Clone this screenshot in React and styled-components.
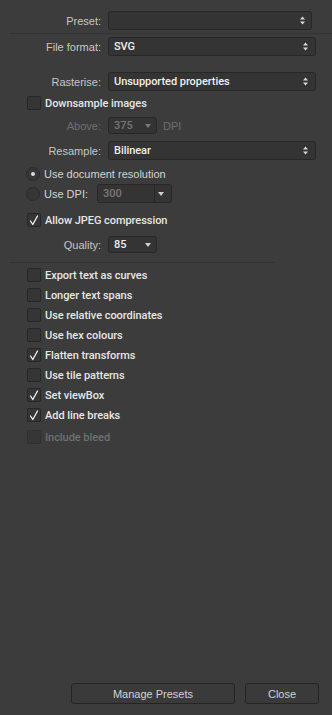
import React from 'react';
import styled, { createGlobalStyle } from 'styled-components';

const GlobalStyle = createGlobalStyle`
  html, body { margin: 0; padding: 0; background: #3c3c3c; }
  body { font-family: "Liberation Sans", Arial, sans-serif; font-size: 11px; color: #d6d6d6; }
`;

const strong = `
  font-family: Roboto, "Liberation Sans", Arial, sans-serif;
  font-weight: 500;
  font-size: 11px;
  letter-spacing: -0.05px;
`;

const Panel = styled.div`
  width: 332px;
  height: 715px;
  display: flex;
  flex-direction: column;
  background: #3c3c3c;
  box-sizing: border-box;
`;

const FormRow = styled.div`
  display: flex;
  align-items: center;
  height: ${p => p.h || 19}px;
  margin-top: ${p => p.mt || 0}px;
  padding-right: ${p => p.pr || 16}px;
`;

const Label = styled.div`
  width: 101px;
  flex: none;
  text-align: right;
  color: ${p => (p.dim ? '#6e6e6e' : '#c6c6c6')};
  margin-right: 7px;
`;

const Field = styled.div`
  flex: ${p => (p.w ? 'none' : 1)};
  width: ${p => (p.w ? `${p.w}px` : 'auto')};
  height: 100%;
  box-sizing: border-box;
  display: flex;
  align-items: center;
  background: #343434;
  border: 1px solid #272727;
  border-radius: 3px;
  padding-left: 5px;
  ${strong}
  color: ${p => (p.dim ? '#767676' : '#efefef')};
`;

const Value = styled.span`
  flex: 1;
`;

const Stepper = styled.svg`
  width: 5px;
  height: 9px;
  margin-right: ${p => p.mr || 7}px;
`;

const Caret = styled.svg`
  width: 6px;
  height: 4px;
  margin-right: ${p => p.mr || 5}px;
`;

const Divider = styled.div`
  height: 1px;
  background: #333333;
  margin-top: ${p => p.mt || 0}px;
  margin-left: 10px;
  width: ${p => p.w || 322}px;
`;

const CheckRow = styled.div`
  display: flex;
  align-items: center;
  height: 14px;
  margin-top: ${p => p.mt || 0}px;
  padding-left: 27px;
`;

const Box = styled.div`
  width: 14px;
  height: 14px;
  box-sizing: border-box;
  flex: none;
  background: ${p => (p.disabled ? '#363636' : '#353535')};
  border: 1px solid ${p => (p.disabled ? '#303030' : '#262626')};
  border-radius: 2px;
  display: flex;
  align-items: center;
  justify-content: center;
`;

const CheckLabel = styled.span`
  margin-left: 4px;
  ${strong}
  color: ${p => (p.disabled ? '#707070' : '#e6e6e6')};
`;

const RadioRow = styled.div`
  display: flex;
  align-items: center;
  height: ${p => p.h || 14}px;
  margin-top: ${p => p.mt || 0}px;
  padding-left: 26px;
`;

const Radio = styled.div`
  width: 14px;
  height: 14px;
  box-sizing: border-box;
  border-radius: 50%;
  background: #363636;
  border: 1px solid #2a2a2a;
  display: flex;
  align-items: center;
  justify-content: center;
  flex: none;
  &::after {
    content: '';
    width: 4px;
    height: 4px;
    border-radius: 50%;
    background: ${p => (p.on ? '#dcdcdc' : 'transparent')};
  }
`;

const RadioLabel = styled.span`
  margin-left: 4px;
  color: #d4d4d4;
  width: ${p => (p.w ? `${p.w}px` : 'auto')};
`;

const Combo = styled.div`
  width: 75px;
  height: 100%;
  box-sizing: border-box;
  display: flex;
  background: #343434;
  border: 1px solid #272727;
  border-radius: 3px;
`;

const ComboText = styled.div`
  flex: 1;
  display: flex;
  align-items: center;
  padding-left: 5px;
  ${strong}
  color: #7a7a7a;
`;

const ComboButton = styled.div`
  width: 16px;
  border-left: 1px solid #272727;
  display: flex;
  align-items: center;
  justify-content: center;
`;

const Unit = styled.span`
  margin-left: 6px;
  color: #6e6e6e;
`;

const Spacer = styled.div`
  flex: 1;
`;

const Footer = styled.div`
  display: flex;
  justify-content: flex-end;
  gap: 10px;
  padding: 0 13px 11px 0;
`;

const Button = styled.div`
  width: ${p => p.w}px;
  height: 21px;
  box-sizing: border-box;
  display: flex;
  align-items: center;
  justify-content: center;
  background: #3a3a3a;
  border: 1px solid #242424;
  border-radius: 3px;
  color: #d2d2d2;
  font-size: 11px;
`;

const UpDown = ({ mr }) => (
  <Stepper mr={mr} viewBox="0 0 5 9">
    <path d="M2.5 0.5 L5 3.5 L0 3.5 Z" fill="#d8d8d8" />
    <path d="M2.5 8.5 L5 5.5 L0 5.5 Z" fill="#d8d8d8" />
  </Stepper>
);

const Down = ({ mr, color = '#d0d0d0' }) => (
  <Caret mr={mr} viewBox="0 0 6 4">
    <path d="M0 0 L6 0 L3 4 Z" fill={color} />
  </Caret>
);

const Tick = () => (
  <svg width="10" height="11" viewBox="0 0 10 11">
    <path d="M1.5 6 L3.8 9.5 L8.5 1" stroke="#f2f2f2" strokeWidth="1.3" fill="none" strokeLinecap="round" strokeLinejoin="round" />
  </svg>
);

const Check = ({ label, checked, disabled, mt }) => (
  <CheckRow mt={mt}>
    <Box disabled={disabled}>{checked && <Tick />}</Box>
    <CheckLabel disabled={disabled}>{label}</CheckLabel>
  </CheckRow>
);

const options = [
  ['Export text as curves', false],
  ['Longer text spans', false],
  ['Use relative coordinates', false],
  ['Use hex colours', false],
  ['Flatten transforms', true],
  ['Use tile patterns', false],
  ['Set viewBox', true],
  ['Add line breaks', true],
];

export default function App() {
  return (
    <Panel>
      <GlobalStyle />
      <FormRow mt={11} pr={20}>
        <Label>Preset:</Label>
        <Field><Value /><UpDown mr={6} /></Field>
      </FormRow>
      <Divider mt={3} />
      <FormRow mt={3}>
        <Label>File format:</Label>
        <Field><Value>SVG</Value><UpDown /></Field>
      </FormRow>
      <FormRow mt={16}>
        <Label>Rasterise:</Label>
        <Field><Value>Unsupported properties</Value><UpDown /></Field>
      </FormRow>
      <Check label="Downsample images" mt={5} />
      <FormRow mt={7} h={17}>
        <Label dim>Above:</Label>
        <Field w={49} dim><Value>375</Value><Down mr={5} color="#7a7a7a" /></Field>
        <Unit>DPI</Unit>
      </FormRow>
      <FormRow mt={7}>
        <Label>Resample:</Label>
        <Field><Value>Bilinear</Value><UpDown /></Field>
      </FormRow>
      <RadioRow mt={7}>
        <Radio on />
        <RadioLabel>Use document resolution</RadioLabel>
      </RadioRow>
      <RadioRow mt={3} h={19}>
        <Radio />
        <RadioLabel w={53}>Use DPI:</RadioLabel>
        <Combo>
          <ComboText>300</ComboText>
          <ComboButton><Down mr={0} /></ComboButton>
        </Combo>
      </RadioRow>
      <Check label="Allow JPEG compression" checked mt={10} />
      <FormRow mt={9} h={17}>
        <Label>Quality:</Label>
        <Field w={49}><Value>85</Value><Down mr={5} /></Field>
      </FormRow>
      <Divider mt={9} w={265} />
      {options.map(([label, checked], i) => (
        <Check key={label} label={label} checked={checked} mt={i === 0 ? 5 : 6} />
      ))}
      <Check label="Include bleed" disabled mt={8} />
      <Spacer />
      <Footer>
        <Button w={164}>Manage Presets</Button>
        <Button w={74}>Close</Button>
      </Footer>
    </Panel>
  );
}
